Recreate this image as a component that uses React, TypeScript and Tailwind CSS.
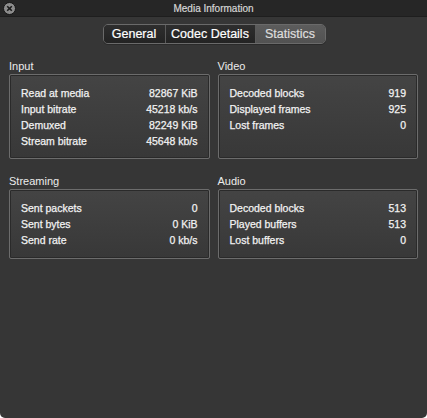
import React from 'react';

type Row = [string, string];

const sections: { title: string; rows: Row[] }[][] = [
  [
    {
      title: 'Input',
      rows: [
        ['Read at media', '82867 KiB'],
        ['Input bitrate', '45218 kb/s'],
        ['Demuxed', '82249 KiB'],
        ['Stream bitrate', '45648 kb/s'],
      ],
    },
    {
      title: 'Video',
      rows: [
        ['Decoded blocks', '919'],
        ['Displayed frames', '925'],
        ['Lost frames', '0'],
      ],
    },
  ],
  [
    {
      title: 'Streaming',
      rows: [
        ['Sent packets', '0'],
        ['Sent bytes', '0 KiB'],
        ['Send rate', '0 kb/s'],
      ],
    },
    {
      title: 'Audio',
      rows: [
        ['Decoded blocks', '513'],
        ['Played buffers', '513'],
        ['Lost buffers', '0'],
      ],
    },
  ],
];

const tabs = ['General', 'Codec Details', 'Statistics'];

const StatBox = ({ title, rows, height }: { title: string; rows: Row[]; height: string }) => (
  <div className="flex flex-col">
    <span className="text-[11px] leading-[13px] text-[#ececec]">{title}</span>
    <div
      className={`mt-[1px] ${height} rounded-[2px] border border-[#6c6c6c] bg-gradient-to-b from-[#444444] to-[#383838] shadow-[inset_0_0_0_1px_#2a2a2a] pl-[11px] pr-[11px] pt-[11px]`}
    >
      {rows.map(([label, value]) => (
        <div
          key={label}
          className="flex justify-between h-4 items-center text-[10.5px] text-[#f2f2f2] [-webkit-text-stroke:0.25px_#f2f2f2]"
        >
          <span>{label}</span>
          <span>{value}</span>
        </div>
      ))}
    </div>
  </div>
);

export default function App() {
  return (
    <div
      className="w-[427px] h-[418px] bg-white"
      style={{ fontFamily: '"Liberation Sans", Arial, sans-serif' }}
    >
      <div className="w-full h-full flex flex-col bg-[#363636] rounded-b-[5px] overflow-hidden">
        {/* title bar */}
        <div className="relative h-[17px] bg-[#262626] flex items-center justify-center border-b border-[#1e1e1e]">
          <div className="absolute left-[3px] top-[2px] w-[13px] h-[13px] rounded-full bg-[#8c8c8c] border border-[#151515] flex items-center justify-center">
            <svg width="7" height="7" viewBox="0 0 7 7">
              <path d="M1.2 1.2 L5.8 5.8 M5.8 1.2 L1.2 5.8" stroke="#1a1a1a" strokeWidth="1.6" />
            </svg>
          </div>
          <span className="text-[10px] text-[#d6d6d6] [-webkit-text-stroke:0.2px_#d6d6d6]">Media Information</span>
        </div>

        {/* segmented tabs */}
        <div className="flex justify-center pt-[7px]">
          <div className="flex h-[20px] ml-[1px] rounded-[5px] border border-[#6a6a6a] overflow-hidden shadow-[0_1px_0_#2a2a2a]">
            {tabs.map((t, i) => {
              const active = t === 'Statistics';
              return (
                <div
                  key={t}
                  className={`flex items-center justify-center text-[12.5px] [-webkit-text-stroke:0.2px_currentColor] ${
                    i > 0 ? 'border-l border-[#5a5a5a]' : ''
                  } ${
                    active
                      ? 'w-[70px] bg-gradient-to-b from-[#5c5c5c] to-[#525252] text-[#dedede]'
                      : 'bg-gradient-to-b from-[#2e2e2e] to-[#232323] text-white'
                  } ${t === 'General' ? 'w-[61px]' : ''} ${t === 'Codec Details' ? 'w-[90px]' : ''}`}
                >
                  {t}
                </div>
              );
            })}
          </div>
        </div>

        {/* stat groups */}
        <div className="flex flex-col gap-[16px] px-[9px] pt-[16px]">
          {sections.map((pair, idx) => (
            <div key={idx} className="grid grid-cols-2 gap-[8px]">
              {pair.map((s) => (
                <StatBox
                  key={s.title}
                  title={s.title}
                  rows={s.rows}
                  height={idx === 0 ? 'h-[85px]' : 'h-[70px]'}
                />
              ))}
            </div>
          ))}
        </div>
      </div>
    </div>
  );
}
